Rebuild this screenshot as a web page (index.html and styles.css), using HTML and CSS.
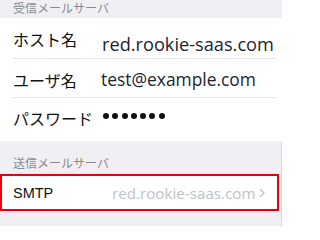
FILE: index.html
```html
<!DOCTYPE html>
<html lang="ja">
<head>
<meta charset="utf-8">
<link rel="stylesheet" href="styles.css">
</head>
<body>
<div class="panel">
  <div class="sec-head top">受信メールサーバ</div>
  <div class="list">
    <div class="row r1"><span class="label">ホスト名</span><span class="value v1">red.rookie-saas.com</span></div>
    <div class="row r2"><span class="label">ユーザ名</span><span class="value">test@example.com</span></div>
    <div class="row r3"><span class="label">パスワード</span><span class="dots"><i></i><i></i><i></i><i></i><i></i><i></i><i></i></span></div>
  </div>
  <div class="gray">
    <div class="sec-head">送信メールサーバ</div>
    <div class="smtp">
      <span class="smtp-label">SMTP</span>
      <span class="smtp-value">red.rookie-saas.com</span>
      <svg class="chev" width="6" height="10" viewBox="0 0 6 10"><path d="M1 1 L5 5 L1 9" fill="none" stroke="#c4c4c8" stroke-width="1.4"/></svg>
    </div>
  </div>
</div>
</body>
</html>
```

FILE: styles.css
```css
html, body { margin: 0; padding: 0; background: #fff; }
body { font-family: "Noto Sans CJK JP", "Noto Sans", sans-serif; color: #111; }
.panel { width: 282px; }
.sec-head {
  font-size: 12px; line-height: 14px; color: #8a8a8e;
  padding-left: 13px;
}
.sec-head.top { background: #efeff4; height: 18px; line-height: 16px; }
.list { padding-left: 13px; background: #fff; }
.row { display: flex; align-items: flex-start; border-bottom: 1px solid #e6e6e6; margin-right: 5px; }
.r1 { height: 40px; }
.r2 { height: 38px; }
.r3 { height: 43px; border-bottom: none; }
.label { font-size: 16px; line-height: 20px; width: 89px; flex: none; }
.r1 .label { margin-top: 11px; }
.r2 .label { margin-top: 11px; }
.r3 .label { margin-top: 10px; }
.value { font-family: "Open Sans", "Noto Sans", sans-serif; line-height: 20px; color: #1c2430; white-space: nowrap; }
.r1 .value { font-size: 18.2px; margin-top: 16px; }
.r2 .value { font-size: 17.4px; margin-top: 10px; margin-left: -1px; }
.dots { display: flex; gap: 3.3px; margin-top: 15px; margin-left: 1px; }
.dots i { width: 6px; height: 6px; border-radius: 50%; background: #111; display: block; }
.gray { background: #efeff4; border-right: 1px solid #dcdce0; height: 85px; padding-top: 15px; box-sizing: border-box; }
.gray .sec-head { height: 18px; }
.smtp {
  margin-right: 2px; height: 37px; box-sizing: border-box;
  border: 2px solid #e8000b; background: #fff;
  display: flex; align-items: center; padding-left: 11px;
}
.smtp-label { font-family: "Liberation Sans", Arial, sans-serif; font-size: 14.5px; color: #111; width: 99px; flex: none; }
.smtp-value { font-family: "Open Sans", "Noto Sans", sans-serif; font-size: 15.2px; color: #c2c2c6; white-space: nowrap; }
.chev { margin-left: 3px; }
```
